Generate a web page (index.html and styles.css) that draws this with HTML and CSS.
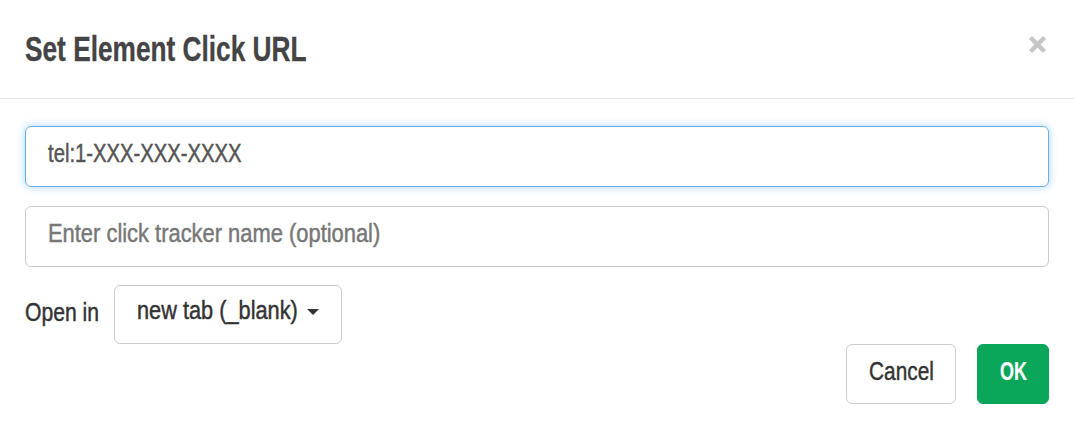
FILE: index.html
```html
<!DOCTYPE html>
<html>
<head>
<meta charset="utf-8">
<link rel="stylesheet" href="styles.css">
</head>
<body>
<div class="modal">
  <div class="modal-header">
    <h1 class="title"><span class="cx cx-title">Set Element Click URL</span></h1>
    <span class="close">
      <svg width="19" height="19" viewBox="0 0 19 19"><path d="M2.5 2.5 L16.5 16.5 M16.5 2.5 L2.5 16.5" stroke="#c6c6c6" stroke-width="4.5"/></svg>
    </span>
  </div>
  <div class="modal-body">
    <div class="field focused"><span class="cx cx-tel">tel:1-XXX-XXX-XXXX</span></div>
    <div class="field placeholder"><span class="cx cx-ph">Enter click tracker name (optional)</span></div>
    <div class="open-row">
      <span class="label"><span class="cx cx-label">Open in</span></span>
      <div class="select"><span class="cx cx-select">new tab (_blank)</span><span class="caret"></span></div>
    </div>
    <div class="actions">
      <button class="btn btn-cancel"><span class="cx cx-cancel">Cancel</span></button>
      <button class="btn btn-ok"><span class="cx cx-ok">OK</span></button>
    </div>
  </div>
</div>
</body>
</html>
```
FILE: styles.css
```css
* { box-sizing: border-box; }
html, body { margin: 0; padding: 0; background: #fff; }
body {
  font-family: "Liberation Sans", Arial, sans-serif;
  width: 1074px;
  height: 448px;
  overflow: hidden;
}
.cx {
  display: inline-block;
  white-space: nowrap;
  transform-origin: left center;
  -webkit-text-stroke: 0.45px currentColor;
}
.modal { width: 1074px; }
.modal-header {
  display: flex;
  align-items: center;
  justify-content: space-between;
  height: 99px;
  padding: 0 27px 0 25px;
  border-bottom: 1px solid #e5e5e5;
}
.title {
  margin: 0;
  font-size: 35px;
  font-weight: bold;
  color: #444;
  line-height: 1.15;
}
.cx-title { transform: scaleX(0.75); -webkit-text-stroke: 0.3px currentColor; }
.close { display: flex; margin-top: -10px; }
.modal-body {
  padding: 27px 25px 0 25px;
  display: flex;
  flex-direction: column;
}
.field {
  height: 61px;
  border: 1px solid #ccc;
  border-radius: 6px;
  padding: 0 22px 7px;
  display: flex;
  align-items: center;
  font-size: 25px;
  color: #555;
  margin-bottom: 18px;
}
.field.focused {
  border-color: #66afe9;
  box-shadow: 0 0 9px rgba(102, 175, 233, 0.55);
  margin-bottom: 19px;
  padding-bottom: 6px;
}
.field.placeholder { color: #777; }
.cx-tel { transform: scaleX(0.81); }
.cx-ph { transform: scaleX(0.876); }
.open-row {
  display: flex;
  align-items: center;
}
.label {
  flex: none;
  width: 89px;
  font-size: 25px;
  color: #333;
  padding-bottom: 4px;
}
.cx-label { transform: scaleX(0.845); }
.select {
  height: 59px;
  width: 228px;
  border: 1px solid #ccc;
  border-radius: 6px;
  display: flex;
  align-items: center;
  padding: 0 0 9px 22px;
  font-size: 25px;
  color: #333;
}
.cx-select { transform: scaleX(0.87); margin-right: -15px; }
.caret {
  flex: none;
  margin-top: 3px;
  width: 0; height: 0;
  border-left: 6px solid transparent;
  border-right: 6px solid transparent;
  border-top: 6px solid #333;
}
.actions {
  display: flex;
  justify-content: flex-end;
  gap: 21px;
}
.btn {
  height: 60px;
  border-radius: 6px;
  font-family: inherit;
  font-size: 26px;
  padding: 0 0 6px;
  cursor: pointer;
  display: flex;
  align-items: center;
  justify-content: center;
}
.btn .cx { transform-origin: center center; }
.btn-cancel { background: #fff; border: 1px solid #ccc; color: #333; width: 110px; }
.cx-cancel { transform: scaleX(0.80); }
.btn-ok { background: #0aa65a; border: 1px solid #0aa65a; color: #fff; font-weight: bold; width: 72px; }
.cx-ok { transform: scaleX(0.69); -webkit-text-stroke: 0.2px currentColor; }
```
